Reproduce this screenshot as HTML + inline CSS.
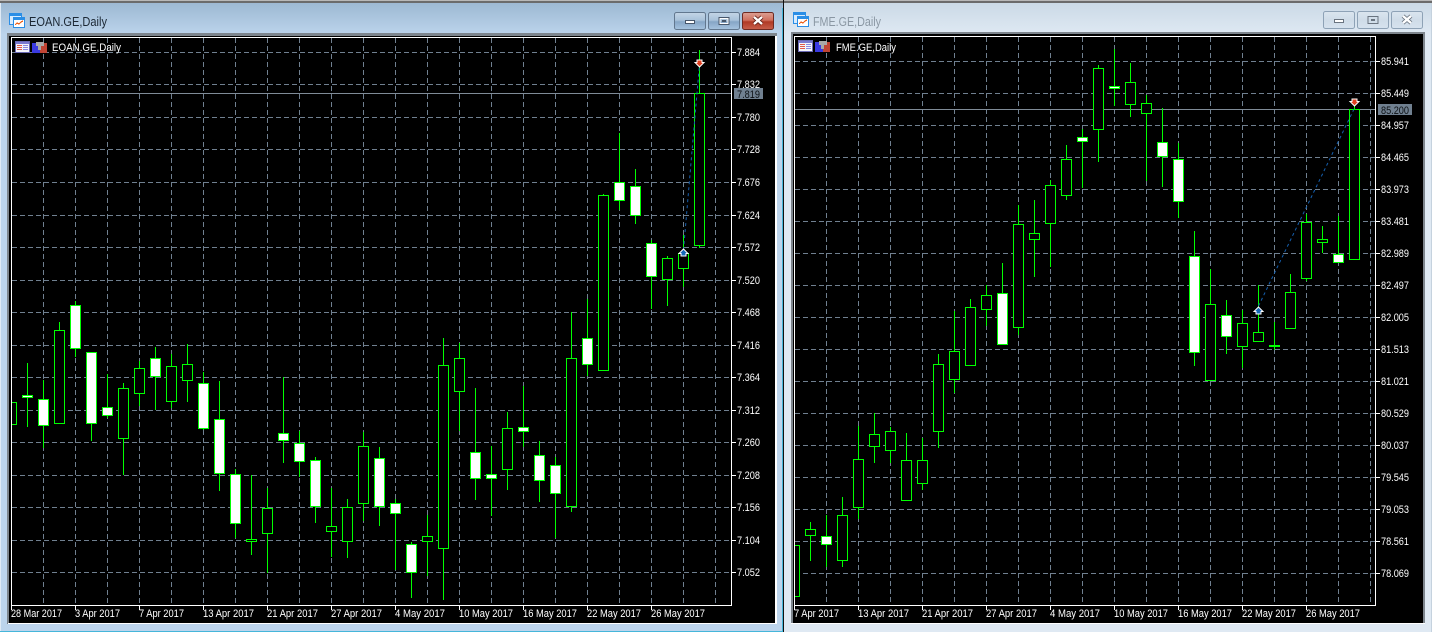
<!DOCTYPE html>
<html><head><meta charset="utf-8"><title>Charts</title>
<style>
html,body{margin:0;padding:0;background:#000;width:1432px;height:632px;overflow:hidden}
svg{display:block}
.g{fill:none;stroke:#708090;stroke-width:1;stroke-dasharray:5 3;shape-rendering:crispEdges}
.a{fill:none;stroke:#fff;stroke-width:1;shape-rendering:crispEdges}
.w{fill:none;stroke:#00ff00;stroke-width:1;shape-rendering:crispEdges}
.bk{fill:#000;stroke:#00ff00;stroke-width:1;shape-rendering:crispEdges}
.wh{fill:#fff;stroke:#00ff00;stroke-width:1;shape-rendering:crispEdges}
.t{font-family:"Liberation Sans",sans-serif;font-size:11px;fill:#fff}
.ti{font-family:"Liberation Sans",sans-serif;font-size:13px}
.tr{fill:none;stroke:#1560b0;stroke-width:1;stroke-dasharray:3 3}
</style></head><body>
<svg width="1432" height="632" viewBox="0 0 1432 632" xmlns="http://www.w3.org/2000/svg">
<defs>
<linearGradient id="lw" x1="0" y1="0" x2="0" y2="1"><stop offset="0" stop-color="#9ab6d0"/><stop offset=".055" stop-color="#bcd4ec"/><stop offset="1" stop-color="#bcd4ec"/></linearGradient>
<linearGradient id="rw" x1="0" y1="0" x2="0" y2="1"><stop offset="0" stop-color="#c9d8e5"/><stop offset=".055" stop-color="#dfe9f3"/><stop offset="1" stop-color="#dfe9f3"/></linearGradient>
<linearGradient id="ba" x1="0" y1="0" x2="0" y2="1"><stop offset="0" stop-color="#c4d5e6"/><stop offset=".45" stop-color="#a9c2da"/><stop offset=".55" stop-color="#86a6c6"/><stop offset="1" stop-color="#a7c4e0"/></linearGradient>
<linearGradient id="bc" x1="0" y1="0" x2="0" y2="1"><stop offset="0" stop-color="#dca094"/><stop offset=".45" stop-color="#d0705e"/><stop offset=".55" stop-color="#b03a26"/><stop offset="1" stop-color="#c8604c"/></linearGradient>
<linearGradient id="bi" x1="0" y1="0" x2="0" y2="1"><stop offset="0" stop-color="#dbe5ef"/><stop offset=".5" stop-color="#cfdce8"/><stop offset="1" stop-color="#d6e2ee"/></linearGradient>
</defs>

<!-- windows -->
<rect x="0" y="0" width="783" height="632" fill="url(#lw)"/>
<rect x="784" y="0" width="648" height="632" fill="url(#rw)"/>
<rect x="0" y="0" width="1432" height="1" fill="#b8b8b8"/>
<rect x="0" y="1" width="1432" height="2" fill="#6b6b6b"/>
<rect x="0" y="3" width="1" height="629" fill="#dfeaf5"/>
<rect x="0" y="631" width="783" height="1" fill="#45b6da"/>
<rect x="782" y="8" width="1" height="624" fill="#45b6da"/>
<rect x="783" y="0" width="1" height="632" fill="#111"/>
<rect x="1431" y="3" width="1" height="629" fill="#c5d2de"/>

<!-- client areas -->
<rect x="7" y="33" width="770" height="591" fill="#7d858d"/>
<rect x="9" y="36" width="766" height="587" fill="#000"/>
<rect x="8" y="623" width="768" height="1" fill="#fff"/>
<rect x="775" y="36" width="2" height="588" fill="#fff"/>
<rect x="791" y="32" width="634" height="592" fill="#7d858d"/>
<rect x="793" y="34" width="630" height="589" fill="#000"/>
<rect x="791" y="623" width="634" height="1" fill="#fff"/>

<!-- title icons -->
<g shape-rendering="crispEdges">
<rect x="9" y="13" width="13" height="12" fill="#2b8ee6"/><rect x="10" y="16" width="11" height="8" fill="#d8ecff"/>
<rect x="13" y="17" width="12" height="11" fill="#2b8ee6"/><rect x="14" y="20" width="10" height="7" fill="#fff"/>
<path d="M15 25l2-2 2 1 2-2 2-1" fill="none" stroke="#f0641e" stroke-width="1.4"/>
<rect x="793" y="12" width="13" height="12" fill="#2b8ee6"/><rect x="794" y="15" width="11" height="8" fill="#d8ecff"/>
<rect x="797" y="16" width="12" height="11" fill="#2b8ee6"/><rect x="798" y="19" width="10" height="7" fill="#fff"/>
<path d="M799 24l2-2 2 1 2-2 2-1" fill="none" stroke="#f0641e" stroke-width="1.4"/>
</g>
<text class="ti" x="29" y="26" fill="#1b2733" textLength="78" lengthAdjust="spacingAndGlyphs">EOAN.GE,Daily</text>
<text class="ti" x="813" y="26" fill="#8a97a3" textLength="68" lengthAdjust="spacingAndGlyphs">FME.GE,Daily</text>

<!-- buttons left -->
<rect x="674.5" y="12.5" width="31" height="17" rx="2" fill="url(#ba)" stroke="#62778e"/>
<rect x="708.5" y="12.5" width="31" height="17" rx="2" fill="url(#ba)" stroke="#62778e"/>
<rect x="742.5" y="12.5" width="31" height="17" rx="2" fill="url(#bc)" stroke="#6e2a22"/>
<rect x="685.5" y="20.5" width="9" height="3" fill="#fff" stroke="#47566a"/>
<rect x="719" y="17.5" width="10" height="7" fill="none" stroke="#47566a" stroke-width="1"/><rect x="720" y="18.5" width="8" height="5" fill="none" stroke="#fff"/><rect x="722" y="20" width="4" height="2" fill="#47566a"/>
<path d="M754 17l8 7M762 17l-8 7" stroke="#5b1c14" stroke-width="4"/><path d="M754 17l8 7M762 17l-8 7" stroke="#fff" stroke-width="2.4"/>
<!-- buttons right -->
<rect x="1323.5" y="11.5" width="31" height="17" rx="2" fill="url(#bi)" stroke="#8ea2b6"/>
<rect x="1357.5" y="11.5" width="31" height="17" rx="2" fill="url(#bi)" stroke="#8ea2b6"/>
<rect x="1391.5" y="11.5" width="31" height="17" rx="2" fill="url(#bi)" stroke="#8ea2b6"/>
<rect x="1334.5" y="19.5" width="9" height="3" fill="#fff" stroke="#6a7480"/>
<rect x="1368" y="16.5" width="10" height="7" fill="none" stroke="#6a7480"/><rect x="1371" y="19" width="4" height="2" fill="#6a7480"/>
<path d="M1403 16l8 7M1411 16l-8 7" stroke="#6a7480" stroke-width="4"/><path d="M1403 16l8 7M1411 16l-8 7" stroke="#fff" stroke-width="2.4"/>

<!-- LEFT grid -->
<path class="g" d="M12 52.5H731M12 84.5H731M12 117.5H731M12 149.5H731M12 182.5H731M12 215.5H731M12 247.5H731M12 280.5H731M12 312.5H731M12 345.5H731M12 377.5H731M12 410.5H731M12 442.5H731M12 475.5H731M12 507.5H731M12 540.5H731M12 572.5H731"/>
<path class="g" d="M43.5 38V605M75.5 38V605M107.5 38V605M139.5 38V605M171.5 38V605M203.5 38V605M235.5 38V605M267.5 38V605M299.5 38V605M331.5 38V605M363.5 38V605M395.5 38V605M427.5 38V605M459.5 38V605M491.5 38V605M523.5 38V605M555.5 38V605M587.5 38V605M619.5 38V605M651.5 38V605M683.5 38V605M715.5 38V605"/>
<path d="M12 93.5H731" stroke="#7f8b97" fill="none" shape-rendering="crispEdges"/>

<!-- LEFT wicks -->
<path class="w" d="M27.5 363V427M43.5 380V448M59.5 322V424M75.5 301V357M91.5 352V441M107.5 374V418M123.5 383V475M139.5 361V406M155.5 347V410M171.5 354V408M187.5 344V402M203.5 372V430M219.5 381V491M235.5 469V538M251.5 475V555M267.5 488V573M283.5 377V463M299.5 431V477M315.5 457V523M331.5 488V557M347.5 499V558M363.5 432V521M379.5 447V526M395.5 499V570M411.5 542V598M427.5 515V576M443.5 338V600M459.5 343V431M475.5 388V500M491.5 446V516M507.5 412V490M523.5 386V447M539.5 441V502M555.5 457V538M571.5 312V512M587.5 299V376M603.5 194V371M619.5 133V210M635.5 169V224M651.5 240V309M667.5 256V306M683.5 235V287M699.5 50V248"/>
<!-- LEFT black bodies -->
<path class="bk" d="M11 402.5h5.5v22h-5.5M54.5 330.5h10v93h-10zM118.5 388.5h10v50h-10zM134.5 368.5h10v25h-10zM166.5 366.5h10v35h-10zM182.5 364.5h10v16h-10zM246.5 539.5h10v2h-10zM262.5 508.5h10v25h-10zM326.5 526.5h10v5h-10zM342.5 507.5h10v34h-10zM358.5 446.5h10v57h-10zM422.5 536.5h10v5h-10zM438.5 365.5h10v183h-10zM454.5 358.5h10v33h-10zM502.5 428.5h10v41h-10zM566.5 358.5h10v148h-10zM598.5 195.5h10v175h-10zM662.5 258.5h10v21h-10zM678.5 253.5h10v15h-10zM694.5 93.5h10v152h-10z"/>
<!-- LEFT white bodies -->
<path class="wh" d="M22.5 395.5h10v2h-10zM38.5 399.5h10v26h-10zM70.5 305.5h10v43h-10zM86.5 352.5h10v71h-10zM102.5 407.5h10v8h-10zM150.5 358.5h10v18h-10zM198.5 383.5h10v45h-10zM214.5 419.5h10v54h-10zM230.5 474.5h10v49h-10zM278.5 433.5h10v7h-10zM294.5 443.5h10v18h-10zM310.5 460.5h10v46h-10zM374.5 458.5h10v48h-10zM390.5 503.5h10v10h-10zM406.5 544.5h10v28h-10zM470.5 452.5h10v26h-10zM486.5 474.5h10v4h-10zM518.5 427.5h10v4h-10zM534.5 455.5h10v25h-10zM550.5 465.5h10v28h-10zM582.5 338.5h10v26h-10zM614.5 182.5h10v18h-10zM630.5 186.5h10v29h-10zM646.5 243.5h10v33h-10z"/>
<path class="tr" d="M683.5 250L699.5 64"/>
<path d="M683.5 249l4.5 4.500h-2v2.500h-5v-2.500h-2z" fill="#1568b8" stroke="#fff"/>
<path d="M699.5 67l-4.500-4.500h2V60h5v2.500h2z" fill="#e04020" stroke="#fff"/>

<!-- LEFT axes -->
<path class="a" d="M11.500 37V606M11 37.500H732M731.500 37V606M11 605.500H732"/>
<path class="a" d="M732 52.500h4M732 84.500h4M732 117.500h4M732 149.500h4M732 182.500h4M732 215.500h4M732 247.500h4M732 280.500h4M732 312.500h4M732 345.500h4M732 377.500h4M732 410.500h4M732 442.500h4M732 475.500h4M732 507.500h4M732 540.500h4M732 572.500h4"/>
<path class="a" d="M11.500 606v4M75.500 606v4M139.500 606v4M203.500 606v4M267.500 606v4M331.500 606v4M395.500 606v4M459.500 606v4M523.500 606v4M587.500 606v4M651.500 606v4"/>
<g class="t">
<text x="737" y="56" textLength="23" lengthAdjust="spacingAndGlyphs">7.884</text>
<text x="737" y="88" textLength="23" lengthAdjust="spacingAndGlyphs">7.832</text>
<text x="737" y="121" textLength="23" lengthAdjust="spacingAndGlyphs">7.780</text>
<text x="737" y="153" textLength="23" lengthAdjust="spacingAndGlyphs">7.728</text>
<text x="737" y="186" textLength="23" lengthAdjust="spacingAndGlyphs">7.676</text>
<text x="737" y="219" textLength="23" lengthAdjust="spacingAndGlyphs">7.624</text>
<text x="737" y="251" textLength="23" lengthAdjust="spacingAndGlyphs">7.572</text>
<text x="737" y="284" textLength="23" lengthAdjust="spacingAndGlyphs">7.520</text>
<text x="737" y="316" textLength="23" lengthAdjust="spacingAndGlyphs">7.468</text>
<text x="737" y="349" textLength="23" lengthAdjust="spacingAndGlyphs">7.416</text>
<text x="737" y="381" textLength="23" lengthAdjust="spacingAndGlyphs">7.364</text>
<text x="737" y="414" textLength="23" lengthAdjust="spacingAndGlyphs">7.312</text>
<text x="737" y="446" textLength="23" lengthAdjust="spacingAndGlyphs">7.260</text>
<text x="737" y="479" textLength="23" lengthAdjust="spacingAndGlyphs">7.208</text>
<text x="737" y="511" textLength="23" lengthAdjust="spacingAndGlyphs">7.156</text>
<text x="737" y="544" textLength="23" lengthAdjust="spacingAndGlyphs">7.104</text>
<text x="737" y="576" textLength="23" lengthAdjust="spacingAndGlyphs">7.052</text>
<text x="11" y="617" textLength="51" lengthAdjust="spacingAndGlyphs">28 Mar 2017</text>
<text x="75" y="617" textLength="45" lengthAdjust="spacingAndGlyphs">3 Apr 2017</text>
<text x="139" y="617" textLength="45" lengthAdjust="spacingAndGlyphs">7 Apr 2017</text>
<text x="203" y="617" textLength="51" lengthAdjust="spacingAndGlyphs">13 Apr 2017</text>
<text x="267" y="617" textLength="51" lengthAdjust="spacingAndGlyphs">21 Apr 2017</text>
<text x="331" y="617" textLength="51" lengthAdjust="spacingAndGlyphs">27 Apr 2017</text>
<text x="395" y="617" textLength="50" lengthAdjust="spacingAndGlyphs">4 May 2017</text>
<text x="459" y="617" textLength="54" lengthAdjust="spacingAndGlyphs">10 May 2017</text>
<text x="523" y="617" textLength="54" lengthAdjust="spacingAndGlyphs">16 May 2017</text>
<text x="587" y="617" textLength="54" lengthAdjust="spacingAndGlyphs">22 May 2017</text>
<text x="651" y="617" textLength="54" lengthAdjust="spacingAndGlyphs">26 May 2017</text>
<text x="52" y="51" textLength="69" lengthAdjust="spacingAndGlyphs">EOAN.GE,Daily</text>
</g>
<rect x="734" y="88" width="29" height="11" fill="#708090"/>
<text class="t" style="fill:#0c1014" x="737" y="98" textLength="23" lengthAdjust="spacingAndGlyphs">7.819</text>

<!-- RIGHT grid -->
<path class="g" d="M795 61.500H1375M795 93.500H1375M795 125.500H1375M795 157.500H1375M795 189.500H1375M795 221.500H1375M795 253.500H1375M795 285.500H1375M795 317.500H1375M795 349.500H1375M795 381.500H1375M795 413.500H1375M795 445.500H1375M795 477.500H1375M795 509.500H1375M795 541.500H1375M795 573.500H1375"/>
<path class="g" d="M826.500 37V605M858.500 37V605M890.500 37V605M922.500 37V605M954.500 37V605M986.500 37V605M1018.500 37V605M1050.500 37V605M1082.500 37V605M1114.500 37V605M1146.500 37V605M1178.500 37V605M1210.500 37V605M1242.500 37V605M1274.500 37V605M1306.500 37V605M1338.500 37V605M1370.500 37V605"/>
<path d="M795 109.500H1375" stroke="#7f8b97" fill="none" shape-rendering="crispEdges"/>

<!-- RIGHT wicks -->
<path class="w" d="M810.500 522V561M826.500 515V567M842.500 497V567M858.500 426V519M874.500 413V463M890.500 427V463M906.500 433V501M922.500 438V490M938.500 354V448M954.500 311V393M970.500 299V366M986.500 285V326M1002.500 263V345M1018.500 205V335M1034.500 200V277M1050.500 180V267M1066.500 145V200M1082.500 129V188M1098.500 65V162M1114.500 49V106M1130.500 63V117M1146.500 95V181M1162.500 108V187M1178.500 143V218M1194.500 231V366M1210.500 269V381M1226.500 300V354M1242.500 310V368M1258.500 285V342M1274.500 322V350M1290.500 274V329M1306.500 214V281M1322.500 226V253M1338.500 216V263M1354.500 106V260"/>
<!-- RIGHT black bodies -->
<path class="bk" d="M795 545.500h4.500v51h-4.500M805.500 529.500h10v6h-10zM837.500 515.500h10v45h-10zM853.500 459.500h10v48h-10zM869.500 434.500h10v12h-10zM885.500 431.500h10v19h-10zM901.500 460.500h10v40h-10zM917.500 460.500h10v23h-10zM933.500 364.500h10v67h-10zM949.500 351.500h10v28h-10zM965.500 307.500h10v58h-10zM981.500 295.500h10v14h-10zM1013.500 224.500h10v103h-10zM1029.500 233.500h10v6h-10zM1045.500 185.500h10v38h-10zM1061.500 159.500h10v36h-10zM1093.500 68.500h10v61h-10zM1125.500 82.500h10v22h-10zM1141.500 103.500h10v10h-10zM1205.500 304.500h10v76h-10zM1237.500 323.500h10v23h-10zM1253.500 332.500h10v9h-10zM1285.500 292.500h10v36h-10zM1301.500 222.500h10v56h-10zM1317.500 239.500h10v3h-10zM1349.500 109.500h10v150h-10z"/>
<!-- RIGHT white bodies -->
<path class="wh" d="M821.500 536.500h10v8h-10zM997.500 293.500h10v51h-10zM1077.500 137.500h10v4h-10zM1109.500 86.500h10v2h-10zM1157.500 142.500h10v14h-10zM1173.500 159.500h10v42h-10zM1189.500 256.500h10v96h-10zM1221.500 315.500h10v21h-10zM1333.500 254.500h10v8h-10z"/>
<rect x="1269" y="345" width="11" height="2" fill="#00ff00"/>
<path class="tr" d="M1258.500 306L1354.500 108"/>
<path d="M1258.500 307l4.500 4.500h-2v2.500h-5v-2.500h-2z" fill="#1568b8" stroke="#fff"/>
<path d="M1354.500 106l-4.500-4.500h2V99h5v2.500h2z" fill="#e04020" stroke="#fff"/>

<!-- RIGHT axes -->
<path class="a" d="M794.500 36V606M794 36.500H1376M1375.500 36V606M794 605.500H1376"/>
<path class="a" d="M1376 61.500h4M1376 93.500h4M1376 125.500h4M1376 157.500h4M1376 189.500h4M1376 221.500h4M1376 253.500h4M1376 285.500h4M1376 317.500h4M1376 349.500h4M1376 381.500h4M1376 413.500h4M1376 445.500h4M1376 477.500h4M1376 509.500h4M1376 541.500h4M1376 573.500h4"/>
<path class="a" d="M794.500 606v4M858.500 606v4M922.500 606v4M986.500 606v4M1050.500 606v4M1114.500 606v4M1178.500 606v4M1242.500 606v4M1306.500 606v4"/>
<g class="t">
<text x="1381" y="65" textLength="28" lengthAdjust="spacingAndGlyphs">85.941</text>
<text x="1381" y="97" textLength="28" lengthAdjust="spacingAndGlyphs">85.449</text>
<text x="1381" y="129" textLength="28" lengthAdjust="spacingAndGlyphs">84.957</text>
<text x="1381" y="161" textLength="28" lengthAdjust="spacingAndGlyphs">84.465</text>
<text x="1381" y="193" textLength="28" lengthAdjust="spacingAndGlyphs">83.973</text>
<text x="1381" y="225" textLength="28" lengthAdjust="spacingAndGlyphs">83.481</text>
<text x="1381" y="257" textLength="28" lengthAdjust="spacingAndGlyphs">82.989</text>
<text x="1381" y="289" textLength="28" lengthAdjust="spacingAndGlyphs">82.497</text>
<text x="1381" y="321" textLength="28" lengthAdjust="spacingAndGlyphs">82.005</text>
<text x="1381" y="353" textLength="28" lengthAdjust="spacingAndGlyphs">81.513</text>
<text x="1381" y="385" textLength="28" lengthAdjust="spacingAndGlyphs">81.021</text>
<text x="1381" y="417" textLength="28" lengthAdjust="spacingAndGlyphs">80.529</text>
<text x="1381" y="449" textLength="28" lengthAdjust="spacingAndGlyphs">80.037</text>
<text x="1381" y="481" textLength="28" lengthAdjust="spacingAndGlyphs">79.545</text>
<text x="1381" y="513" textLength="28" lengthAdjust="spacingAndGlyphs">79.053</text>
<text x="1381" y="545" textLength="28" lengthAdjust="spacingAndGlyphs">78.561</text>
<text x="1381" y="577" textLength="28" lengthAdjust="spacingAndGlyphs">78.069</text>
<text x="794" y="617" textLength="45" lengthAdjust="spacingAndGlyphs">7 Apr 2017</text>
<text x="858" y="617" textLength="51" lengthAdjust="spacingAndGlyphs">13 Apr 2017</text>
<text x="922" y="617" textLength="51" lengthAdjust="spacingAndGlyphs">21 Apr 2017</text>
<text x="986" y="617" textLength="51" lengthAdjust="spacingAndGlyphs">27 Apr 2017</text>
<text x="1050" y="617" textLength="50" lengthAdjust="spacingAndGlyphs">4 May 2017</text>
<text x="1114" y="617" textLength="54" lengthAdjust="spacingAndGlyphs">10 May 2017</text>
<text x="1178" y="617" textLength="54" lengthAdjust="spacingAndGlyphs">16 May 2017</text>
<text x="1242" y="617" textLength="54" lengthAdjust="spacingAndGlyphs">22 May 2017</text>
<text x="1306" y="617" textLength="54" lengthAdjust="spacingAndGlyphs">26 May 2017</text>
<text x="836" y="51" textLength="60" lengthAdjust="spacingAndGlyphs">FME.GE,Daily</text>
</g>
<rect x="1378" y="104" width="34" height="11" fill="#708090"/>
<text class="t" style="fill:#0c1014" x="1381" y="114" textLength="28" lengthAdjust="spacingAndGlyphs">85.200</text>

<!-- chart label icons -->
<g shape-rendering="crispEdges">
<rect x="15.500" y="41.500" width="14" height="11" fill="#f4f4fa" stroke="#6a6ab4"/>
<rect x="16" y="42" width="13" height="2" fill="#7a7ad0"/>
<rect x="17" y="45" width="5" height="1" fill="#e05a4a"/><rect x="23" y="45" width="5" height="1" fill="#8a8ae0"/>
<rect x="17" y="47" width="5" height="1" fill="#e05a4a"/><rect x="23" y="47" width="5" height="1" fill="#8a8ae0"/>
<rect x="17" y="49" width="5" height="1" fill="#e05a4a"/><rect x="23" y="49" width="5" height="1" fill="#8a8ae0"/>
<rect x="32" y="43" width="8" height="10" fill="#3a3ae0"/><rect x="40" y="43" width="7" height="10" fill="#c04434"/>
<rect x="36" y="42" width="8" height="4" fill="#a8a8a8"/><rect x="38" y="46" width="3" height="4" fill="#a8a8a8"/>

<rect x="798.500" y="40.500" width="14" height="11" fill="#f4f4fa" stroke="#6a6ab4"/>
<rect x="799" y="41" width="13" height="2" fill="#7a7ad0"/>
<rect x="800" y="44" width="5" height="1" fill="#e05a4a"/><rect x="806" y="44" width="5" height="1" fill="#8a8ae0"/>
<rect x="800" y="46" width="5" height="1" fill="#e05a4a"/><rect x="806" y="46" width="5" height="1" fill="#8a8ae0"/>
<rect x="800" y="48" width="5" height="1" fill="#e05a4a"/><rect x="806" y="48" width="5" height="1" fill="#8a8ae0"/>
<rect x="815" y="42" width="8" height="10" fill="#3a3ae0"/><rect x="823" y="42" width="7" height="10" fill="#c04434"/>
<rect x="819" y="41" width="8" height="4" fill="#a8a8a8"/><rect x="821" y="45" width="3" height="4" fill="#a8a8a8"/>
</g>
</svg>
</body></html>
